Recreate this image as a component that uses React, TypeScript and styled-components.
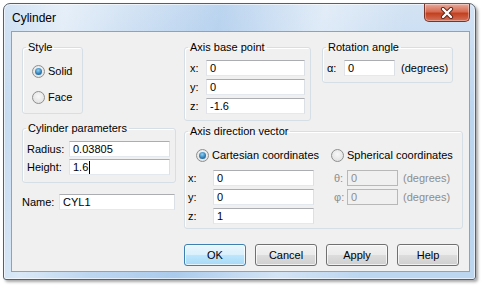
import styled, { createGlobalStyle } from "styled-components";

const GlobalStyle = createGlobalStyle`
  html, body {
    margin: 0;
    padding: 0;
    background: #ffffff;
  }
  body {
    font-family: "Liberation Sans", Arial, sans-serif;
    font-size: 11px;
    color: #000;
  }
`;

const Screen = styled.div`
  width: 481px;
  height: 285px;
  padding: 3px 0 0 3px;
  box-sizing: border-box;
`;

const Window = styled.div`
  width: 473px;
  height: 277px;
  box-sizing: border-box;
  border: 1px solid #56606b;
  border-radius: 7px 7px 3px 3px;
  background:
    linear-gradient(
      100deg,
      rgba(255, 255, 255, 0) 0%,
      rgba(255, 255, 255, 0.45) 12%,
      rgba(255, 255, 255, 0) 26%,
      rgba(120, 170, 225, 0.25) 42%,
      rgba(255, 255, 255, 0.35) 62%,
      rgba(255, 255, 255, 0) 78%
    ),
    linear-gradient(#d3e3f4, #bcd5ef 40%, #bcd6f0);
  box-shadow: inset 0 0 0 1px rgba(255, 255, 255, 0.6),
    2px 2px 3px rgba(0, 0, 0, 0.35);
  display: flex;
  flex-direction: column;
`;

const TitleBar = styled.div`
  height: 27px;
  display: flex;
  align-items: flex-start;
  justify-content: space-between;
  padding: 0 5px 0 8px;
`;

const Title = styled.span`
  font-size: 12px;
  line-height: 14px;
  margin-top: 7px;
`;

const CloseButton = styled.div`
  width: 46px;
  height: 18px;
  box-sizing: border-box;
  border: 1px solid #76352a;
  border-top: none;
  border-radius: 0 0 5px 5px;
  background: linear-gradient(#e9a99a, #d66b52 45%, #c2401f 55%, #d4705a);
  box-shadow: inset 0 0 0 1px rgba(255, 255, 255, 0.35);
  display: flex;
  align-items: center;
  justify-content: center;
`;

const Client = styled.div`
  flex: 1;
  margin: 0 5px 7px 7px;
  border: 1px solid #8fa3b8;
  background: #f0f0f0;
  display: flex;
  gap: 8px;
  padding: 8px 0 0 10px;
`;

const Column = styled.div<{ $width: number }>`
  width: ${(p) => p.$width}px;
  display: flex;
  flex-direction: column;
`;

const Group = styled.fieldset<{ $width: number; $height: number }>`
  margin: 0;
  padding: 0;
  min-width: 0;
  box-sizing: border-box;
  width: ${(p) => p.$width}px;
  height: ${(p) => p.$height}px;
  border: 1px solid #d5dfe5;
  border-radius: 3px;
  box-shadow: inset 1px 1px 0 #fff;
`;

const Legend = styled.legend`
  padding: 0 2px;
  margin-left: 3px;
  line-height: 14px;
`;

const RadioStack = styled.div`
  display: flex;
  flex-direction: column;
  gap: 13px;
  padding: 11px 0 0 9px;
`;

const RadioLabel = styled.label`
  display: flex;
  align-items: center;
  gap: 3px;
  height: 13px;
  line-height: 13px;
  white-space: nowrap;
`;

const RadioCircle = styled.span<{ $checked?: boolean }>`
  width: 13px;
  height: 13px;
  box-sizing: border-box;
  border-radius: 50%;
  border: 1px solid #8e8f8f;
  background: radial-gradient(circle at 50% 40%, #f8f8f8, #dcdcdc);
  display: flex;
  align-items: center;
  justify-content: center;
  flex-shrink: 0;

  &::after {
    content: "";
    display: ${(p) => (p.$checked ? "block" : "none")};
    width: 7px;
    height: 7px;
    border-radius: 50%;
    background: radial-gradient(circle at 45% 35%, #8fd3f5, #2f7fb8 55%, #1b4d7a);
  }
`;

const FieldGrid = styled.div<{ $cols: string; $gap: number; $pad: string }>`
  display: grid;
  grid-template-columns: ${(p) => p.$cols};
  row-gap: ${(p) => p.$gap}px;
  align-items: center;
  padding: ${(p) => p.$pad};
`;

const Label = styled.span<{ $disabled?: boolean; $indent?: number }>`
  color: ${(p) => (p.$disabled ? "#8d8d8d" : "#000")};
  padding-left: ${(p) => p.$indent ?? 0}px;
  white-space: nowrap;
  line-height: 16px;
`;

const TextBox = styled.div<{ $width: number; $disabled?: boolean }>`
  width: ${(p) => p.$width}px;
  height: 16px;
  box-sizing: border-box;
  border: 1px solid;
  border-color: ${(p) =>
    p.$disabled ? "#b8b8b8" : "#abadb3 #dbdfe6 #e3e9ef #e2e3ea"};
  background: ${(p) => (p.$disabled ? "#f0f0f0" : "#fff")};
  color: ${(p) => (p.$disabled ? "#8d8d8d" : "#000")};
  padding-left: 3px;
  line-height: 14px;
  display: flex;
  align-items: center;
  white-space: nowrap;
`;

const Caret = styled.span`
  width: 1px;
  height: 13px;
  background: #000;
  margin-left: 1px;
`;

const NameRow = styled.div`
  display: flex;
  align-items: center;
  margin-top: 11px;
`;

const TopRow = styled.div`
  display: flex;
  gap: 11px;
  align-items: flex-start;
`;

const Inline = styled.div`
  display: flex;
  align-items: center;
  padding: 6px 0 0 4px;
`;

const RadioRow = styled.div`
  display: flex;
  padding: 11px 0 0 11px;
  gap: 12px;
`;

const ButtonRow = styled.div`
  display: flex;
  gap: 9px;
  margin-top: 15px;
`;

const Button = styled.div<{ $default?: boolean }>`
  width: 62px;
  height: 22px;
  box-sizing: border-box;
  border: 1px solid ${(p) => (p.$default ? "#3c7fb1" : "#707070")};
  border-radius: 3px;
  background: ${(p) =>
    p.$default
      ? "linear-gradient(#eaf6fd, #d9f0fc 50%, #bee6fd 50%, #a7d9f5)"
      : "linear-gradient(#f2f2f2, #ebebeb 50%, #dddddd 50%, #cfcfcf)"};
  box-shadow: inset 0 0 0 1px rgba(255, 255, 255, 0.7);
  display: flex;
  align-items: center;
  justify-content: center;
`;

function Radio({ label, checked }: { label: string; checked?: boolean }) {
  return (
    <RadioLabel>
      <RadioCircle $checked={checked} />
      {label}
    </RadioLabel>
  );
}

export default function App() {
  return (
    <Screen>
      <GlobalStyle />
      <Window>
        <TitleBar>
          <Title>Cylinder</Title>
          <CloseButton>
            <svg width="16" height="12" viewBox="0 0 16 12">
              <path
                d="M4 2 L12 10 M12 2 L4 10"
                stroke="#5a2418"
                strokeWidth="4.2"
                strokeLinecap="round"
              />
              <path
                d="M4 2 L12 10 M12 2 L4 10"
                stroke="#fff"
                strokeWidth="2.4"
                strokeLinecap="round"
              />
            </svg>
          </CloseButton>
        </TitleBar>
        <Client>
          <Column $width={154}>
            <Group $width={61} $height={74}>
              <Legend>Style</Legend>
              <RadioStack>
                <Radio label="Solid" checked />
                <Radio label="Face" />
              </RadioStack>
            </Group>
            <Group $width={154} $height={62} style={{ marginTop: 7 }}>
              <Legend>Cylinder parameters</Legend>
              <FieldGrid $cols="42px 101px" $gap={2} $pad="6px 0 0 4px">
                <Label>Radius:</Label>
                <TextBox $width={101}>0.03805</TextBox>
                <Label>Height:</Label>
                <TextBox $width={101}>
                  1.6
                  <Caret />
                </TextBox>
              </FieldGrid>
            </Group>
            <NameRow>
              <Label style={{ width: 37 }}>Name:</Label>
              <TextBox $width={116}>CYL1</TextBox>
            </NameRow>
          </Column>
          <Column $width={279}>
            <TopRow>
              <Group $width={127} $height={81}>
                <Legend>Axis base point</Legend>
                <FieldGrid $cols="16px 99px" $gap={3} $pad="6px 0 0 5px">
                  <Label>x:</Label>
                  <TextBox $width={99}>0</TextBox>
                  <Label>y:</Label>
                  <TextBox $width={99}>0</TextBox>
                  <Label>z:</Label>
                  <TextBox $width={99}>-1.6</TextBox>
                </FieldGrid>
              </Group>
              <Group $width={131} $height={43}>
                <Legend>Rotation angle</Legend>
                <Inline>
                  <Label style={{ width: 17 }}>α:</Label>
                  <TextBox $width={51}>0</TextBox>
                  <Label $indent={6}>(degrees)</Label>
                </Inline>
              </Group>
            </TopRow>
            <Group $width={279} $height={105} style={{ marginTop: 3 }}>
              <Legend>Axis direction vector</Legend>
              <RadioRow>
                <Radio label="Cartesian coordinates" checked />
                <Radio label="Spherical coordinates" />
              </RadioRow>
              <FieldGrid
                $cols="25px 101px 33px 51px auto"
                $gap={3}
                $pad="8px 0 0 3px"
              >
                <Label>x:</Label>
                <TextBox $width={101}>0</TextBox>
                <Label $disabled $indent={20}>θ:</Label>
                <TextBox $width={51} $disabled>0</TextBox>
                <Label $disabled $indent={5}>(degrees)</Label>
                <Label>y:</Label>
                <TextBox $width={101}>0</TextBox>
                <Label $disabled $indent={20}>φ:</Label>
                <TextBox $width={51} $disabled>0</TextBox>
                <Label $disabled $indent={5}>(degrees)</Label>
                <Label>z:</Label>
                <TextBox $width={101}>1</TextBox>
              </FieldGrid>
            </Group>
            <ButtonRow>
              <Button $default>OK</Button>
              <Button>Cancel</Button>
              <Button>Apply</Button>
              <Button>Help</Button>
            </ButtonRow>
          </Column>
        </Client>
      </Window>
    </Screen>
  );
}
